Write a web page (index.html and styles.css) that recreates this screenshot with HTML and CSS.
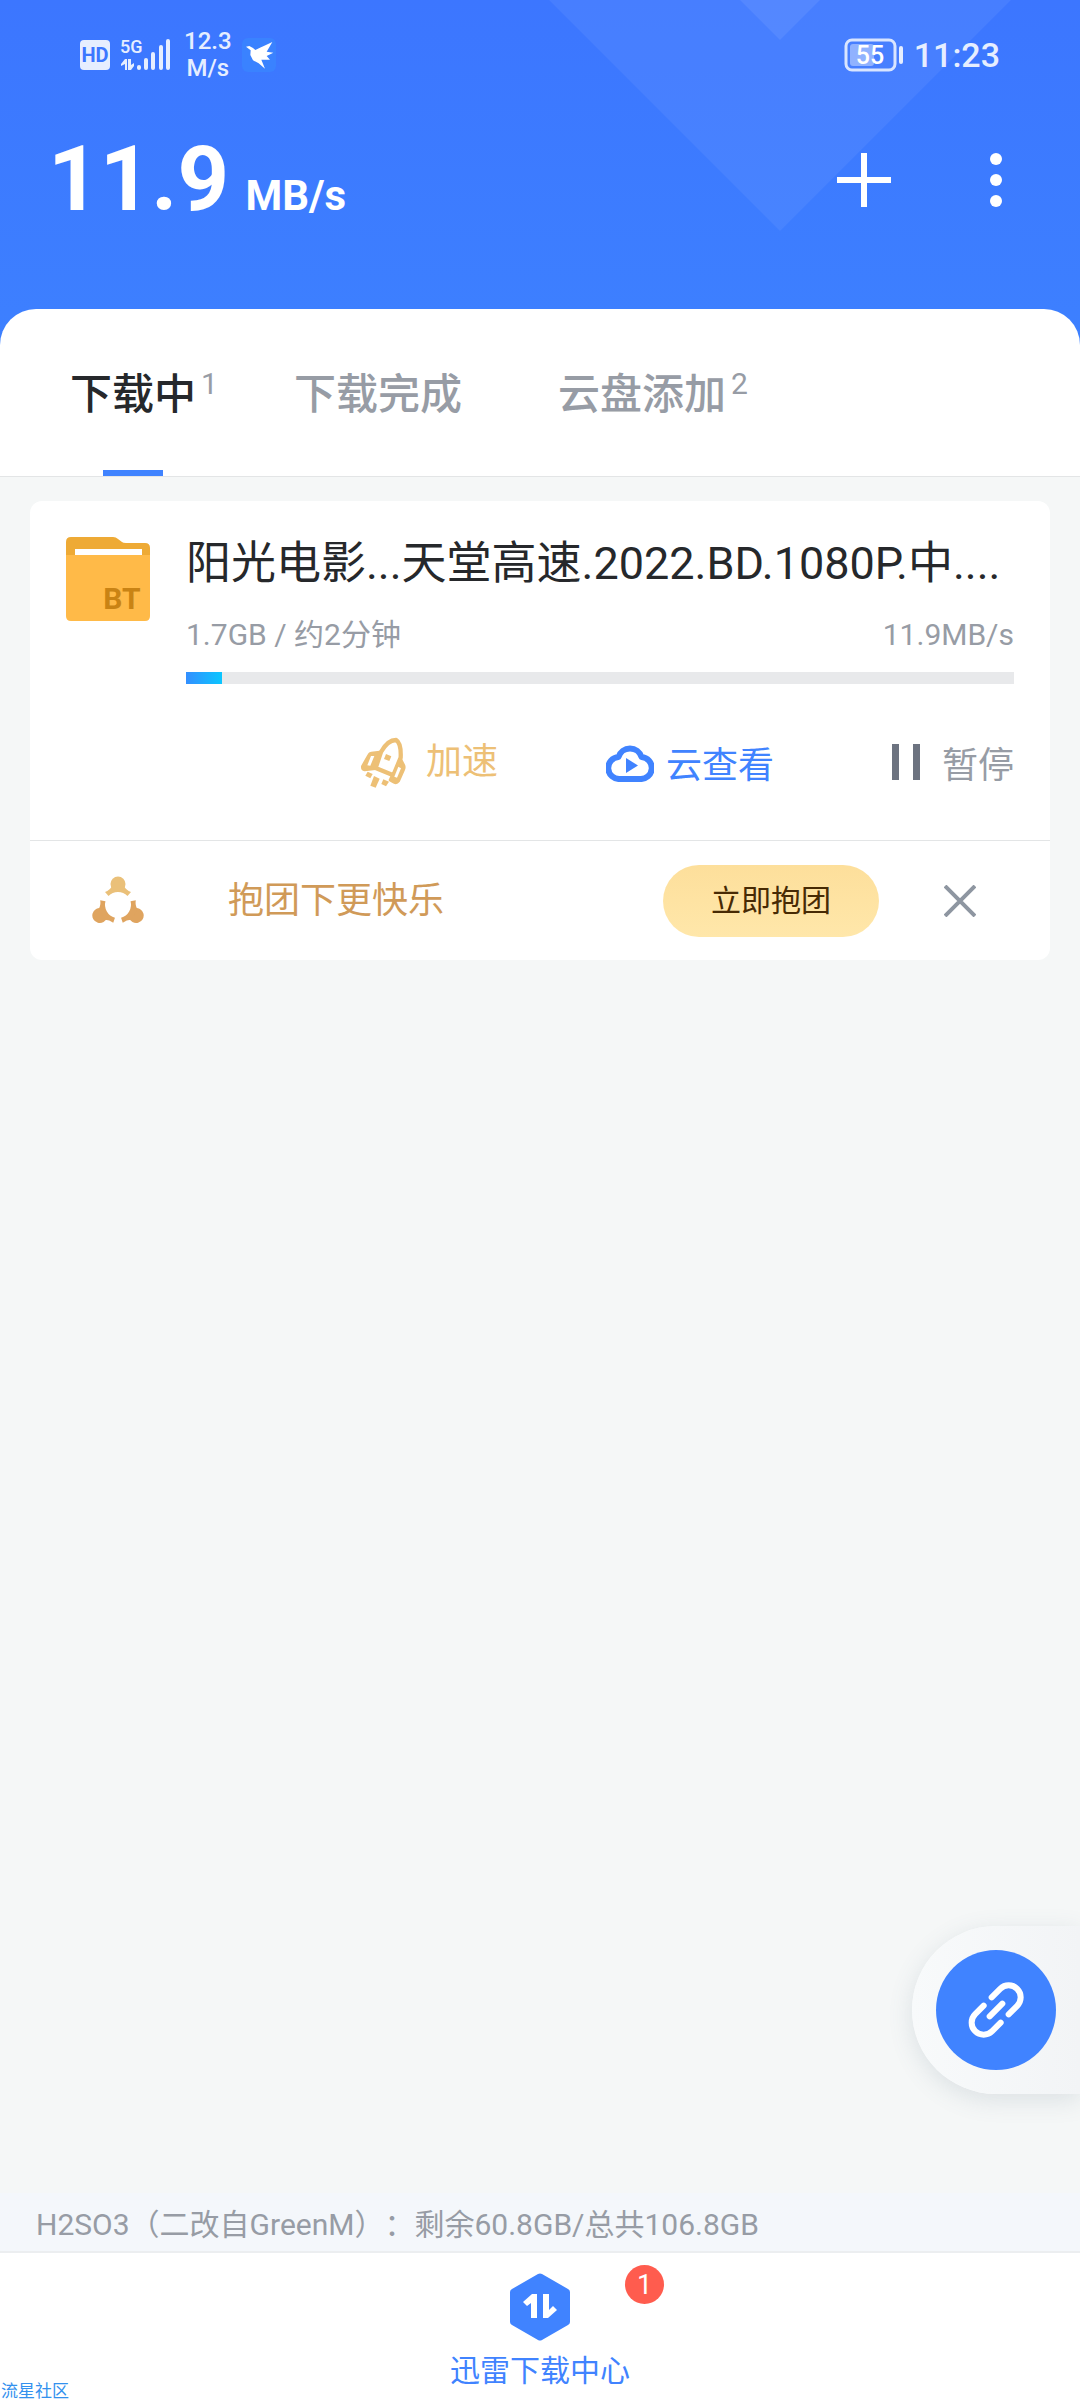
FILE: index.html
```
<!DOCTYPE html>
<html lang="zh-CN">
<head>
  <meta charset="UTF-8">
  <meta name="viewport" content="width=device-width, initial-scale=1.0">
  <title>迅雷下载中心</title>
  <link rel="stylesheet" href="styles.css">
</head>
<body>
  <header class="header">
    <!-- Background triangles -->
    <svg class="header-bg" width="462" height="231" viewBox="0 0 462 231" aria-hidden="true">
      <path d="M0 0H462L231 231Z" fill="#fff" fill-opacity=".06"/>
      <path d="M191 0H271L231 40Z" fill="#fff" fill-opacity=".07"/>
    </svg>

    <div class="status-bar">
      <svg width="30" height="30" viewBox="0 0 30 30">
        <rect width="30" height="30" rx="4" fill="#e6eeff"/>
        <text class="hd-text" x="15" y="22" text-anchor="middle">HD</text>
      </svg>
      <svg width="54" height="42" viewBox="0 -4 54 42">
        <text class="net-text" x="0" y="15">5G</text>
        <g fill="#e6eeff">
          <path d="M7 21V32H5V26L1 28V26L5 21ZM8 21H11V27L14 25V28L11 32H8Z"/>
          <rect x="17" y="27" width="4" height="5" rx="2"/>
          <rect x="24" y="20" width="4" height="12" rx="2"/>
          <rect x="31" y="14" width="4" height="18" rx="2"/>
          <rect x="39" y="7" width="4" height="25" rx="2"/>
          <rect x="46" y="1" width="4" height="31" rx="2"/>
        </g>
      </svg>
      <p class="net-speed">12.3<br>M/s</p>
      <svg width="34" height="34" viewBox="540 50 102 102">
        <rect x="540" y="50" width="102" height="102" rx="18" fill="#3a82ff"/>
        <path d="M552 76L562 74L573 80L580 86L597 78L607 73L631 62L614 91L634 94L614 104L624 115L598 115L609 142L590 126L573 117L565 101L566 87Z" fill="#fff"/>
      </svg>
      <svg class="battery" width="60" height="34" viewBox="0 0 60 34">
        <rect x="2" y="2" width="49" height="30" rx="6" fill="none" stroke="#d9e5ff" stroke-width="3"/>
        <rect x="6" y="6" width="24" height="22" rx="3" fill="#fff" fill-opacity=".4"/>
        <rect x="55" y="8" width="4" height="18" rx="2" fill="#e6eeff"/>
        <text class="battery-text" x="26" y="26" text-anchor="middle">55</text>
      </svg>
      <time class="clock">11:23</time>
    </div>

    <div class="title-bar">
      <h1 class="speed">11.9 <span class="speed-unit">MB/s</span></h1>
      <button class="icon-btn" type="button" aria-label="添加">
        <svg width="54" height="54" viewBox="0 0 54 54"><path d="M27 0V54M0 27H54" stroke="#fff" stroke-width="6"/></svg>
      </button>
      <button class="icon-btn" type="button" aria-label="更多">
        <svg width="12" height="54" viewBox="0 0 12 54" fill="#fff"><circle cx="6" cy="6" r="6"/><circle cx="6" cy="27" r="6"/><circle cx="6" cy="48" r="6"/></svg>
      </button>
    </div>
  </header>

  <nav class="tabs">
    <button class="tab active" type="button"><span class="tab-name">下载中</span><span class="count">1</span></button>
    <button class="tab no-count" type="button"><span class="tab-name">下载完成</span></button>
    <button class="tab" type="button"><span class="tab-name">云盘添加</span><span class="count">2</span></button>
  </nav>

  <main class="content">
    <article class="card">
      <div class="task">
        <!-- BT folder -->
        <svg class="folder" width="84" height="84" viewBox="0 0 84 84">
          <path d="M5 0H47Q50 0 52 2L56 5Q57 6 60 6H79Q84 6 84 11V40H0V5Q0 0 5 0Z" fill="#eeaa35"/>
          <path d="M0 18H84V79Q84 84 79 84H5Q0 84 0 79Z" fill="#ffba48"/>
          <path d="M9 12H76V18H9Z" fill="#fff"/>
          <text class="bt-text" x="56" y="72" text-anchor="middle">BT</text>
        </svg>
        <div class="info">
          <h2 class="name">阳光电影...天堂高速.2022.BD.1080P.中....</h2>
          <div class="meta"><span>1.7GB / 约2分钟</span><span>11.9MB/s</span></div>
          <div class="progress" role="progressbar" aria-label="下载进度">
            <div class="progress-fill" style="width: 4.4%"></div>
          </div>
          <div class="actions">
            <button class="action boost" type="button">
              <svg width="54" height="51" viewBox="60 48 162 153">
                <g fill="currentColor" stroke="currentColor" stroke-width="8" stroke-linejoin="round">
                  <path d="M119 93L94 96Q89 97 87 101L67 136Q66 146 74 147L106 143Z"/>
                  <path d="M181 112L192 134Q194 140 191 146L176 180Q170 188 162 184L150 177L158 160Z"/>
                </g>
                <path d="M107 141L123 93Q143 57 168 57Q184 66 182 110L160 163Z" fill="#fff" stroke="currentColor" stroke-width="13" stroke-linejoin="round"/>
                <path d="M93 105H103L91 134L82 133Z" fill="#fff"/>
                <path d="M175 137L183 142L171 170L163 167Z" fill="#fff"/>
                <g fill="currentColor">
                  <path d="M138 99L154 106L148 120L132 114Z"/>
                  <path d="M83 152L98 159L91 172L76 164Z"/>
                  <path d="M102 165L119 173L107 200L91 194Z"/>
                  <path d="M130 175L147 182L138 196L124 189Z"/>
                </g>
              </svg>
              加速
            </button>
            <button class="action cloud" type="button">
              <svg width="48" height="39" viewBox="0 0 48 39">
                <path d="M14 36A11 11 0 0 1 12.5 14A12 12 0 0 1 35.5 14A11 11 0 0 1 34 36Z" fill="none" stroke="currentColor" stroke-width="6" stroke-linejoin="round"/>
                <path d="M20 15L32 22.5L20 30Z" fill="currentColor"/>
              </svg>
              云查看
            </button>
            <button class="action pause" type="button">
              <svg width="48" height="36" viewBox="0 0 48 36"><path d="M10 0H17V36H10ZM31 0H38V36H31Z" fill="#6d7380"/></svg>
              暂停
            </button>
          </div>
        </div>
      </div>

      <div class="promo">
        <svg width="54" height="50" viewBox="-27 -29 54 50">
          <g fill="#eac079"><circle cx="0" cy="-21" r="7.5"/><path d="M-13 -13Q-8 -15 -6 -19H6Q8 -15 13 -13L9.5 -9A13.5 13.5 0 0 0 -9.5 -9Z"/></g>
          <g fill="#dfa45f" transform="rotate(120)"><circle cx="0" cy="-21" r="7.5"/><path d="M-13 -13Q-8 -15 -6 -19H6Q8 -15 13 -13L9.5 -9A13.5 13.5 0 0 0 -9.5 -9Z"/></g>
          <g fill="#dfa45f" transform="rotate(240)"><circle cx="0" cy="-21" r="7.5"/><path d="M-13 -13Q-8 -15 -6 -19H6Q8 -15 13 -13L9.5 -9A13.5 13.5 0 0 0 -9.5 -9Z"/></g>
        </svg>
        <p class="promo-text">抱团下更快乐</p>
        <button class="promo-btn" type="button">立即抱团</button>
        <button class="close-btn" type="button" aria-label="关闭">
          <svg width="32" height="32" viewBox="0 0 32 32"><path d="M1 1L31 31M31 1L1 31" stroke="#8e96a1" stroke-width="4"/></svg>
        </button>
      </div>
    </article>
  </main>

  <!-- Floating link button -->
  <div class="fab">
    <button class="fab-btn" type="button" aria-label="链接">
      <svg width="60" height="60" viewBox="378 300 180 180" fill="none" stroke="#fff" stroke-width="18" stroke-linecap="round">
        <path d="M455 352L480.5 326.5A36 36 0 0 1 531.5 377.5L506 403"/>
        <path d="M431 377L405.5 402.5A36 36 0 0 0 456.5 453.5L482 428"/>
        <path d="M449 409L487 371"/>
      </svg>
    </button>
  </div>

  <p class="storage">H2SO3（二改自GreenM）：剩余60.8GB/总共106.8GB</p>

  <footer class="bottom-nav">
    <a class="nav-item" href="#">
      <svg width="60" height="68" viewBox="0 0 60 68">
        <path d="M28 1Q30 0 32 1L58 16Q60 17 60 19V49Q60 51 58 52L32 67Q30 68 28 67L2 52Q0 51 0 49V19Q0 17 2 16Z" fill="#4083ff"/>
        <path d="M27 21H22L13 29L17 33L21 30V45H27ZM33 21H39V37L43 33L47 37L38 45H33Z" fill="#fff"/>
      </svg>
      <span>迅雷下载中心</span>
      <span class="badge">1</span>
    </a>
    <span class="watermark">流星社区</span>
  </footer>
</body>
</html>
```

FILE: styles.css
```
* {
  margin: 0;
  padding: 0;
  box-sizing: border-box;
}
body {
  display: flex;
  flex-direction: column;
  min-height: 100vh;
  background: #f5f7f7;
  font-family: Roboto, "Noto Sans CJK SC", sans-serif;
  color: #26282b;
}
button {
  border: none;
  background: none;
  font: inherit;
  color: inherit;
  cursor: pointer;
}
svg {
  display: block;
  flex: none;
}

/* Header */
.header {
  position: relative;
  padding-bottom: 95px;
  background: linear-gradient(#3c76ff, #3d80ff);
  color: #fff;
}
.header-bg {
  position: absolute;
  top: 0;
  right: 69px;
}
.status-bar {
  position: relative;
  display: flex;
  align-items: center;
  gap: 10px;
  height: 110px;
  padding: 0 80px;
  color: #e6eeff;
}
.hd-text {
  font-size: 20px;
  font-weight: 700;
  fill: #3c77ff;
}
.net-text {
  font-size: 18px;
  font-weight: 500;
  fill: #e6eeff;
}
.net-speed {
  font-size: 24px;
  line-height: 27px;
  font-weight: 500;
  text-align: center;
}
.battery {
  margin-left: auto;
}
.battery-text {
  font-size: 25px;
  font-weight: 500;
  fill: #fff;
}
.clock {
  font-size: 34px;
  font-weight: 500;
}
.title-bar {
  position: relative;
  display: flex;
  align-items: center;
  height: 140px;
  padding: 0 60px 0 48px;
}
.speed {
  flex: 1;
  font-size: 90px;
  line-height: 90px;
  font-weight: 700;
}
.speed-unit {
  margin-left: -6px;
  font-size: 42px;
  line-height: 42px;
}
.icon-btn {
  display: flex;
  justify-content: center;
  width: 132px;
}
.icon-btn:last-child {
  margin-right: -42px;
}

/* Tabs */
.tabs {
  position: relative;
  display: flex;
  gap: 76px;
  margin-top: -36px;
  padding: 0 70px;
  border-bottom: 1px solid #e3e5e6;
  border-radius: 36px 36px 0 0;
  background: #fff;
}
.tab {
  display: flex;
  height: 167px;
  color: #979ca5;
  line-height: 172px;
}
.tab-name {
  position: relative;
  font-size: 42px;
  font-weight: 500;
}
.tab.active .tab-name {
  color: #26282b;
}
.tab.active .tab-name::after {
  content: "";
  position: absolute;
  left: 50%;
  bottom: 0;
  width: 60px;
  height: 6px;
  margin-left: -30px;
  background: #4083ff;
}
.count {
  padding-left: 5px;
  font-size: 30px;
  line-height: 150px;
}
.no-count {
  padding-right: 20px;
}

/* Download card */
.content {
  flex: 1;
  padding: 24px 30px;
}
.card {
  border-radius: 12px;
  background: #fff;
}
.task {
  display: flex;
  gap: 36px;
  padding: 36px 36px 0;
  border-bottom: 1px solid #e3e5e6;
}
.bt-text {
  font-size: 30px;
  font-weight: 700;
  fill: #c98314;
}
.info {
  flex: 1;
  min-width: 0;
}
.name {
  font-size: 45px;
  line-height: 54px;
  font-weight: 400;
  white-space: nowrap;
}
.meta {
  display: flex;
  justify-content: space-between;
  margin: 24px 0 17px;
  font-size: 30px;
  line-height: 40px;
  color: #979ca5;
}
.progress {
  height: 12px;
  background: #e8e9eb;
}
.progress-fill {
  height: 100%;
  background: linear-gradient(90deg, #338fff, #0bc6ff);
}
.actions {
  display: flex;
  justify-content: flex-end;
  gap: 108px;
  height: 156px;
}
.action {
  display: flex;
  align-items: center;
  gap: 12px;
  font-size: 36px;
}
.boost {
  color: #edc076;
  line-height: 42px;
}
.cloud {
  color: #4083ff;
}
.pause {
  color: #979ca5;
}

/* Promo row */
.promo {
  display: flex;
  align-items: center;
  height: 119px;
  padding: 0 74px 0 61px;
}
.promo-text {
  flex: 1;
  padding-left: 83px;
  font-size: 36px;
  line-height: 40px;
  color: #d09a58;
}
.promo-btn {
  width: 216px;
  height: 72px;
  border-radius: 36px;
  background: linear-gradient(#fddf9b, #ffe7aa);
  font-size: 30px;
  line-height: 40px;
  color: #472a04;
}
.close-btn {
  margin-left: 65px;
}

/* Floating button */
.fab {
  position: fixed;
  right: 0;
  bottom: 306px;
  padding: 24px;
  border-radius: 84px 0 0 84px;
  background: linear-gradient(90deg, #f8fafb, #f2f4f6);
  box-shadow: 0 6px 24px rgba(90, 110, 130, 0.16);
}
.fab-btn {
  display: flex;
  align-items: center;
  justify-content: center;
  width: 120px;
  height: 120px;
  border-radius: 50%;
  background: #4083ff;
}

/* Bottom */
.storage {
  padding: 6px 36px 0;
  border-bottom: 2px solid #eceef0;
  background: #f4f7fb;
  font-size: 30px;
  line-height: 52px;
  color: #979ca5;
  text-spacing-trim: space-all;
}
.bottom-nav {
  position: relative;
  display: flex;
  justify-content: center;
  height: 147px;
  padding-top: 20px;
  background: #fff;
}
.nav-item {
  position: relative;
  display: flex;
  flex-direction: column;
  align-items: center;
  gap: 10px;
  font-size: 30px;
  line-height: 40px;
  color: #4083ff;
  text-decoration: none;
}
.badge {
  position: absolute;
  top: -8px;
  right: -34px;
  width: 39px;
  height: 39px;
  border-radius: 50%;
  background: #ff5c4e;
  font-size: 27px;
  line-height: 40px;
  text-align: center;
  color: #fff;
}
.watermark {
  position: absolute;
  left: 1px;
  bottom: 0;
  font-size: 17px;
  line-height: 17px;
  color: #3391ee;
}
```
